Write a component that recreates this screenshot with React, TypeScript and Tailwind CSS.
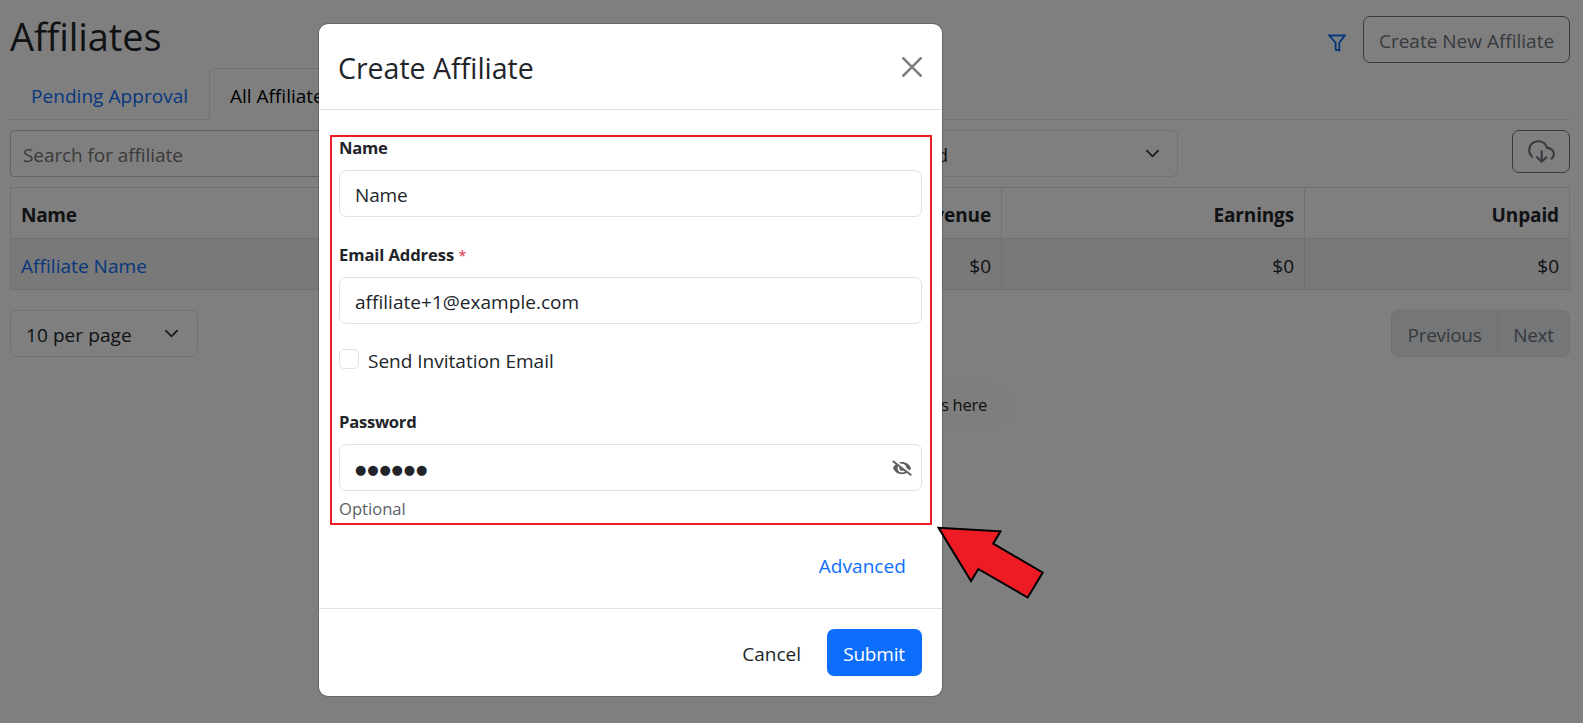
import React from "react";

function Chevron() {
  return (
    <svg viewBox="0 0 16 16" className="h-[15px] w-[15px]" fill="none" stroke="#343a40" strokeWidth="2" strokeLinecap="round" strokeLinejoin="round">
      <path d="m2 5 6 6 6-6" />
    </svg>
  );
}

function Funnel() {
  return (
    <svg viewBox="0 0 18 18" className="mt-[7px] h-[18px] w-[18px]" fill="none" stroke="#0d6efd" strokeWidth="1.800">
      <path d="M1.200 1.500H16.800L11.300 8.600V16.500L7.600 15.700V8.600Z" />
    </svg>
  );
}

function CloudDownload() {
  return (
    <svg viewBox="0 0 27 23" className="h-[23px] w-[27px]" fill="none" stroke="currentColor" strokeWidth="2.1" strokeLinecap="round" strokeLinejoin="round">
      <path d="M4 16.700C2.300 15 1.100 13 1.100 10.300C1.100 5 5 1.200 10.200 1.200C14.600 1.200 18 3.700 19 7.900C23 7.900 25.900 10.700 25.900 14.200C25.900 16.200 25 17.700 23.600 18.700" />
      <path d="M13.700 11.200V21.600M9 17.200L13.700 21.800L18.400 17.200" />
    </svg>
  );
}

function EyeOff() {
  return (
    <svg viewBox="0 0 20 16" className="h-4 w-5" fill="none">
      <path d="M1 8.300C2.700 4.200 6 2 10 2C14 2 17.300 4.200 19 8.300C17.300 12.200 14 14.200 10 14.200C6 14.200 2.700 12.200 1 8.300Z" fill="#5c5f62" />
      <circle cx="10" cy="8.200" r="4.400" fill="#fff" />
      <circle cx="10" cy="8.200" r="2.600" fill="#5c5f62" />
      <path d="M1.200 0 20 14.400" stroke="#fff" strokeWidth="3.400" />
      <path d="M.7 1 19.300 15.200" stroke="#5c5f62" strokeWidth="1.900" />
    </svg>
  );
}

function CloseIcon() {
  return (
    <svg viewBox="0 0 16 16" className="h-5 w-5" fill="#000" fillOpacity="0.5">
      <path d="M.293.293a1 1 0 0 1 1.414 0L8 6.586 14.293.293a1 1 0 1 1 1.414 1.414L9.414 8l6.293 6.293a1 1 0 0 1-1.414 1.414L8 9.414l-6.293 6.293a1 1 0 0 1-1.414-1.414L6.586 8 .293 1.707a1 1 0 0 1 0-1.414z" />
    </svg>
  );
}

function Page() {
  return (
    <div className="flex h-full flex-col pr-[13px] pl-[10px]">
      <header className="flex h-[68px] shrink-0 items-start justify-between">
        <h1 className="mt-[12px] text-[38px] leading-[48px] tracking-[-0.1px]">Affiliates</h1>
        <div className="mt-4 flex items-center gap-[17px]">
          <Funnel />
          <button className="h-[47px] w-[207px] rounded-[7px] border border-[#6c757d] pt-[2px] text-[#6c757d]">Create New Affiliate</button>
        </div>
      </header>

      <nav className="flex h-[52px] shrink-0">
        <div className="w-[199px] border-b border-[#dee2e6] pt-[13px] pl-[21px] leading-[30px] tracking-[0.05px] text-[#0d6efd]">Pending Approval</div>
        <div className="w-[160px] rounded-t-[7px] border border-b-0 border-[#dee2e6] pt-[12px] pl-[20px] leading-[30px] text-black">All Affiliates</div>
        <div className="flex-1 border-b border-[#dee2e6]" />
      </nav>

      <div className="mt-[10px] flex h-[57px] shrink-0 items-start justify-between">
        <div className="flex gap-[10px]">
          <div className="h-[47px] w-[574px] rounded-[4px] border border-[#c4c4c4] pt-[9px] pl-[12px] leading-[30px] tracking-[-0.08px] text-[#757575]">Search for affiliate</div>
          <div className="flex h-[47px] w-[584px] items-center justify-between rounded-[7px] border border-[#dee2e6] pr-[17px] pl-[267px]">
            <span className="pt-[2px]">Approved</span>
            <Chevron />
          </div>
        </div>
        <button className="flex h-[43px] w-[58px] items-center justify-center rounded-[7px] border border-[#6c757d] text-[#6c757d]">
          <CloudDownload />
        </button>
      </div>

      <table className="h-[103px] w-full shrink-0 table-fixed border-collapse text-right [&_td]:border [&_td]:border-[#dee2e6] [&_td]:px-[10px] [&_td]:pt-[3px] [&_th]:border [&_th]:border-[#dee2e6] [&_th]:px-[10px] [&_th]:pt-[3px]">
        <colgroup>
          <col className="w-[691px]" />
          <col className="w-[300px]" />
          <col className="w-[303px]" />
          <col />
        </colgroup>
        <tbody>
          <tr className="h-[51px]">
            <th className="text-left tracking-[-0.29px]">Name</th>
            <th className="tracking-[-0.12px]">Revenue</th>
            <th className="tracking-[-0.15px]">Earnings</th>
            <th className="tracking-[-0.12px]">Unpaid</th>
          </tr>
          <tr className="h-[51px] bg-[#f2f2f2]">
            <td className="text-left tracking-[0.05px] text-[#0d6efd]">Affiliate Name</td>
            <td>$0</td>
            <td>$0</td>
            <td>$0</td>
          </tr>
        </tbody>
      </table>

      <div className="mt-5 flex h-[47px] shrink-0 justify-between">
        <div className="flex w-[188px] items-center justify-between rounded-[7px] border border-[#dee2e6] pr-[18px] pl-[15px]">
          <span className="pt-[3px] tracking-[0.08px]">10 per page</span>
          <Chevron />
        </div>
        <div className="flex overflow-hidden rounded-[7px] border border-[#dee2e6] bg-[#e9ecef] tracking-[-0.3px] text-[#6c757d]">
          <button className="w-[106px] border-r border-[#dee2e6] pt-[3px]">Previous</button>
          <button className="w-[71px] pt-[3px]">Next</button>
        </div>
      </div>

      <div className="mt-[26px] ml-[556px] flex h-[44px] w-[450px] shrink-0 items-center justify-end rounded-full bg-[#fdfdfd] pr-[29px] text-[16.6px] tracking-[-0.3px]">
        Customize your affiliate fields here
      </div>
    </div>
  );
}

function Field({ children }: { children: React.ReactNode }) {
  return (
    <div className="flex h-[47px] shrink-0 items-center justify-between rounded-[7px] border border-[#dee2e6] pr-[9px] pl-[15px]">{children}</div>
  );
}

function Modal() {
  return (
    <div className="absolute top-[23px] left-[318px] flex h-[674px] w-[625px] flex-col rounded-[10px] border border-black/[0.175] bg-white bg-clip-padding">
      <div className="flex h-[86px] shrink-0 items-center justify-between border-b border-[#dee2e6] pr-5 pl-[19px]">
        <h2 className="pt-[2px] text-[28.5px] leading-[38px]">Create Affiliate</h2>
        <CloseIcon />
      </div>

      <div className="flex h-[498px] shrink-0 flex-col px-5 pt-[25px]">
        <label className="h-[35px] text-[16.6px] leading-[26px] font-bold tracking-[-0.3px]">Name</label>
        <Field><span className="pt-[3px] tracking-[-0.15px]">Name</span></Field>

        <label className="mt-[25px] h-[35px] text-[16.6px] leading-[26px] font-bold tracking-[-0.1px]">
          Email Address <span className="text-[15px] font-normal text-[#dc3545]">*</span>
        </label>
        <Field><span className="pt-[3px] tracking-[0.03px]">affiliate+1@example.com</span></Field>

        <div className="mt-[25px] flex h-5 items-center gap-[9px]">
          <span className="h-5 w-5 rounded-[5px] border border-[#dee2e6]" />
          <span className="pt-[3px]">Send Invitation Email</span>
        </div>

        <label className="mt-[40px] h-[35px] text-[16.6px] leading-[26px] font-bold tracking-[-0.26px]">Password</label>
        <Field>
          <span className="pt-[4px] font-['DejaVu_Sans'] text-[13px] leading-[20px] tracking-[0.85px]">●●●●●●</span>
          <EyeOff />
        </Field>
        <div className="mt-[5px] text-[16.6px] leading-[26px] text-[#5c6064]">Optional</div>

        <div className="mt-[29px] self-end pr-[16px] leading-[30px] tracking-[0.08px] text-[#0d6efd]">Advanced</div>
      </div>

      <div className="flex flex-1 items-center justify-end gap-[26px] border-t border-[#dee2e6] pr-5">
        <button className="pt-[3px]">Cancel</button>
        <button className="h-[47px] w-[95px] rounded-[7px] bg-[#0d6efd] pt-[2px] pr-[1px] tracking-[-0.2px] text-white">Submit</button>
      </div>
    </div>
  );
}

export default function App() {
  return (
    <div className="relative h-[723px] w-[1583px] overflow-hidden bg-white font-['Open_Sans','Noto_Sans',sans-serif] text-[19px] leading-[30px] text-[#212529]">
      <Page />
      <div className="absolute inset-0 bg-black/50" />
      <Modal />
      <div className="absolute top-[135px] left-[330px] h-[390px] w-[602px] border-2 border-[#ed1c24]" />
      <svg className="absolute top-[520px] left-[930px] h-[85px] w-[120px]" viewBox="930 520 120 85">
        <path d="M938.500 527.800 1000.500 531.300 993.200 543.700 1042.700 572.500 1027.700 597.500 978.300 569 971 581Z" fill="#ed1c24" stroke="#000" strokeWidth="2" />
      </svg>
    </div>
  );
}
